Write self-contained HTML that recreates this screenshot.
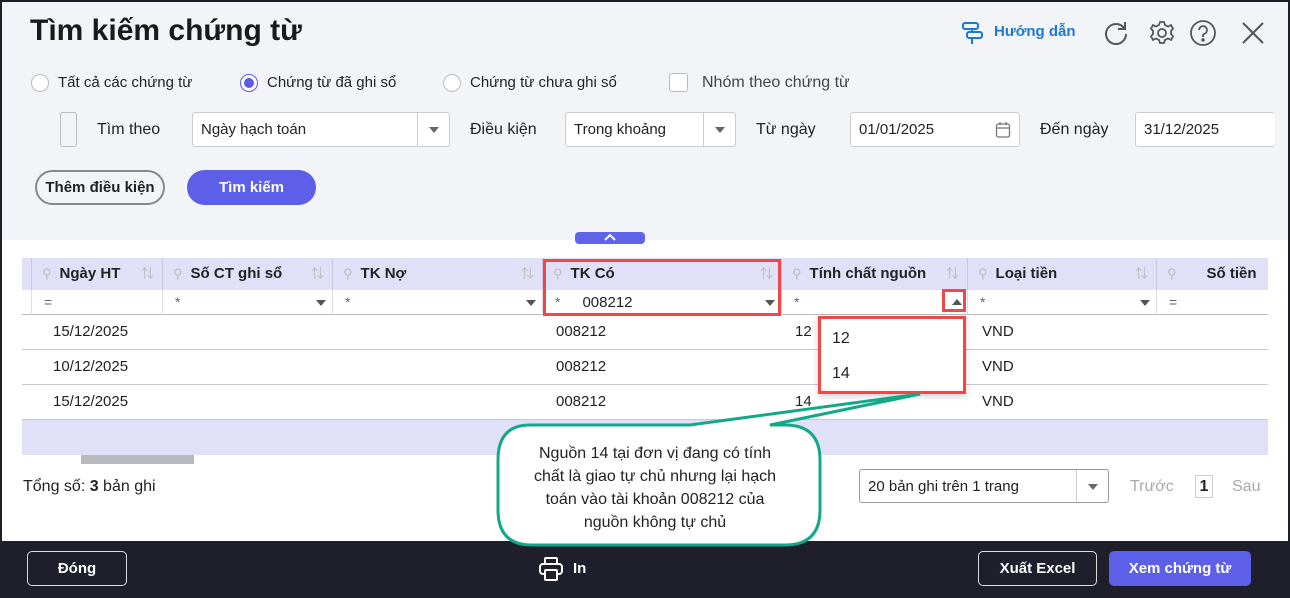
<!DOCTYPE html>
<html><head><meta charset="utf-8"><style>
*{margin:0;padding:0;box-sizing:border-box}
body{width:1290px;height:598px;overflow:hidden;font-family:"Liberation Sans","Noto Sans CJK SC",sans-serif;font-size:15px;color:#222;background:#1e1f2b;position:relative}
.a{position:absolute}
.top{left:2px;top:2px;width:1286px;height:238px;background:#f3f4f8}
.mid{left:2px;top:240px;width:1286px;height:301px;background:#fff}
.rad{width:18px;height:18px;border:1px solid #bbb;border-radius:50%;background:#fff}
.inp{background:#fff;border:1px solid #ccc;border-radius:3px;height:35px;padding:0 8px;line-height:33px;font-size:15px}
.dd{position:absolute;right:0;top:0;width:32px;height:33px;border-left:1px solid #ccc}
.dd:after{content:"";position:absolute;left:11px;top:14px;border:5px solid transparent;border-top:6px solid #666}
.th{top:258px;height:32px;background:#e0e0f8;font-weight:bold;font-size:15px;line-height:32px;border-right:1px solid #c8c8e0}
.fr{top:290px;height:25px;background:#fff;border-right:1px solid #ddd;border-bottom:1px solid #bbb;font-size:14px;color:#666;line-height:25px}
.row{left:22px;width:1246px;height:1px;background:#c8c8d4}
.c{font-size:15px;line-height:34px}
.pin{color:#bbb;font-weight:normal;margin:0 8px 0 10px;font-size:13px}
.srt{position:absolute;right:8px;top:0;color:#bbb;font-weight:normal;font-size:13px}
.btn{border-radius:5px;font-weight:bold;color:#fff;text-align:center;font-size:15px}
</style></head><body>
<div class="a top"></div><div class="a mid"></div>
<div class="a" style="left:30px;top:14px;font-size:30px;font-weight:bold;color:#1a1a1a">Tìm kiếm chứng từ</div>
<svg class="a" style="left:960px;top:20px" width="26" height="26" viewBox="0 0 26 26" fill="none" stroke="#1a78d6" stroke-width="2"><rect x="3" y="3" width="15" height="6" rx="2"/><rect x="7" y="12" width="15" height="6" rx="2"/><path d="M12 9v3M12 18v6"/></svg>
<div class="a" style="left:994px;top:23px;color:#1a78d6;font-weight:bold;font-size:15px">Hướng dẫn</div>
<svg class="a" style="left:1102px;top:19px" width="28" height="28" viewBox="0 0 28 28" fill="none" stroke="#555" stroke-width="2"><path d="M22 9A10 10 0 1 0 24 15"/><path d="M23 3v7h-7"/></svg>
<svg class="a" style="left:1148px;top:19px" width="28" height="28" viewBox="0 0 28 28" fill="none" stroke="#555" stroke-width="1.8"><circle cx="14" cy="14" r="4"/><path d="M12 3h4l1 3 3 1.5 3-1.5 2 3.5-2 2.5v3l2 2.5-2 3.5-3-1.5-3 1.5-1 3h-4l-1-3-3-1.5-3 1.5-2-3.5 2-2.5v-3l-2-2.5 2-3.5 3 1.5 3-1.5z"/></svg>
<svg class="a" style="left:1189px;top:19px" width="28" height="28" viewBox="0 0 28 28" fill="none" stroke="#555" stroke-width="1.8"><circle cx="14" cy="14" r="12"/><path d="M10 11a4 4 0 1 1 5 4c-1 .5-1 1-1 3"/><circle cx="14" cy="21" r=".8" fill="#555"/></svg>
<svg class="a" style="left:1240px;top:20px" width="26" height="26" viewBox="0 0 26 26" stroke="#555" stroke-width="2"><path d="M3 3l20 20M23 3L3 23"/></svg>

<div class="a rad" style="left:31px;top:74px"></div><div class="a" style="left:58px;top:74px">Tất cả các chứng từ</div>
<div class="a rad" style="left:240px;top:74px;border-color:#5b5be8"><div style="margin:3px;width:10px;height:10px;border-radius:50%;background:#5b5be8"></div></div><div class="a" style="left:267px;top:74px">Chứng từ đã ghi sổ</div>
<div class="a rad" style="left:443px;top:74px"></div><div class="a" style="left:470px;top:74px">Chứng từ chưa ghi sổ</div>
<div class="a" style="left:669px;top:73px;width:19px;height:19px;border:1px solid #bbb;border-radius:3px;background:#fff"></div><div class="a" style="left:702px;top:74px;color:#444;font-size:16px">Nhóm theo chứng từ</div>

<div class="a" style="left:60px;top:112px;width:17px;height:35px;border:1px solid #bbb;border-radius:3px;background:#f3f4f8"></div>
<div class="a" style="left:97px;top:121px;font-size:16px">Tìm theo</div>
<div class="a inp" style="left:192px;top:112px;width:258px">Ngày hạch toán<div class="dd"></div></div>
<div class="a" style="left:470px;top:121px;font-size:16px">Điều kiện</div>
<div class="a inp" style="left:565px;top:112px;width:171px">Trong khoảng<div class="dd"></div></div>
<div class="a" style="left:756px;top:121px;font-size:16px">Từ ngày</div>
<div class="a inp" style="left:850px;top:112px;width:170px">01/01/2025
<svg class="a" style="right:8px;top:8px" width="16" height="18" viewBox="0 0 16 18" fill="none" stroke="#777" stroke-width="1.3"><rect x="1.5" y="3" width="13" height="13" rx="2"/><path d="M1.5 7h13M5 1v3M11 1v3"/></svg></div>
<div class="a" style="left:1040px;top:121px;font-size:16px">Đến ngày</div>
<div class="a inp" style="left:1135px;top:112px;width:140px;border-right:none">31/12/2025</div>

<div class="a" style="left:35px;top:170px;width:130px;height:35px;border:2px solid #888;border-radius:18px;font-weight:bold;text-align:center;line-height:31px;font-size:15px">Thêm điều kiện</div>
<div class="a btn" style="left:187px;top:170px;width:129px;height:35px;border-radius:18px;background:#5d5fe8;line-height:35px">Tìm kiếm</div>
<div class="a" style="left:575px;top:232px;width:70px;height:12px;border-radius:4px;background:#6163e8"><svg style="display:block;margin:1px auto" width="14" height="9" viewBox="0 0 14 9" fill="none" stroke="#fff" stroke-width="2"><path d="M2 7l5-5 5 5"/></svg></div>

<div class="a th" style="left:22px;width:10px"></div>
<div class="a th" style="left:32px;width:131px"><span class="pin">⚲</span>Ngày HT<span class="srt">⇅</span></div>
<div class="a th" style="left:163px;width:170px"><span class="pin">⚲</span>Số CT ghi sổ<span class="srt">⇅</span></div>
<div class="a th" style="left:333px;width:210px"><span class="pin">⚲</span>TK Nợ<span class="srt">⇅</span></div>
<div class="a th" style="left:543px;width:239px"><span class="pin">⚲</span>TK Có<span class="srt">⇅</span></div>
<div class="a th" style="left:782px;width:186px"><span class="pin">⚲</span>Tính chất nguồn<span class="srt">⇅</span></div>
<div class="a th" style="left:968px;width:189px"><span class="pin">⚲</span>Loại tiền<span class="srt">⇅</span></div>
<div class="a th" style="left:1157px;width:111px;border-right:none"><span class="pin" style="margin-right:30px">⚲</span>Số tiền</div>
<div class="a fr" style="left:22px;width:10px"></div>
<div class="a fr" style="left:32px;width:131px;padding-left:12px">=</div>
<div class="a fr" style="left:163px;width:170px;padding-left:12px">*</div>
<div class="a fr" style="left:333px;width:210px;padding-left:12px">*</div>
<div class="a fr" style="left:543px;width:239px;padding-left:12px">*<span style="color:#222;margin-left:22px;font-size:15px">008212</span></div>
<div class="a fr" style="left:782px;width:186px;padding-left:12px">*</div>
<div class="a fr" style="left:968px;width:189px;padding-left:12px">*</div>
<div class="a fr" style="left:1157px;width:111px;padding-left:12px;border-right:none">=</div>
<div class="a" style="left:316px;top:300px;border:5px solid transparent;border-top:6px solid #555"></div>
<div class="a" style="left:526px;top:300px;border:5px solid transparent;border-top:6px solid #555"></div>
<div class="a" style="left:765px;top:300px;border:5px solid transparent;border-top:6px solid #555"></div>
<div class="a" style="left:1140px;top:300px;border:5px solid transparent;border-top:6px solid #555"></div>
<div class="a" style="left:952px;top:294px;border:5px solid transparent;border-bottom:6px solid #555"></div>
<div class="a row" style="top:349px"></div><div class="a row" style="top:384px"></div><div class="a row" style="top:419px"></div>
<div class="a" style="left:22px;top:420px;width:1246px;height:35px;background:#e0e0f8"></div>
<div class="a c" style="left:53px;top:315px">15/12/2025</div><div class="a c" style="left:53px;top:350px">10/12/2025</div><div class="a c" style="left:53px;top:385px">15/12/2025</div>
<div class="a c" style="left:556px;top:315px">008212</div><div class="a c" style="left:556px;top:350px">008212</div><div class="a c" style="left:556px;top:385px">008212</div>
<div class="a c" style="left:795px;top:315px">12</div><div class="a c" style="left:795px;top:385px">14</div>
<div class="a c" style="left:982px;top:315px">VND</div><div class="a c" style="left:982px;top:350px">VND</div><div class="a c" style="left:982px;top:385px">VND</div>
<div class="a" style="left:543px;top:259px;width:238px;height:57px;border:3px solid #f04848"></div>
<div class="a" style="left:942px;top:289px;width:24px;height:23px;border:3px solid #f04848"></div>
<div class="a" style="left:818px;top:316px;width:148px;height:78px;background:#fff;border:3px solid #f04848;box-shadow:0 2px 6px rgba(0,0,0,.2)"></div>
<div class="a" style="left:832px;top:330px;font-size:16px">12</div><div class="a" style="left:832px;top:365px;font-size:16px">14</div>
<div class="a" style="left:81px;top:455px;width:113px;height:9px;background:#b8b9be"></div>
<div class="a" style="left:23px;top:478px;font-size:16px">Tổng số: <b>3</b> bản ghi</div>
<div class="a inp" style="left:859px;top:469px;width:250px;height:34px;border-color:#999">20 bản ghi trên 1 trang<div class="dd"></div></div>
<div class="a" style="left:1130px;top:478px;color:#aaa;font-size:16px">Trước</div>
<div class="a" style="left:1195px;top:475px;width:18px;height:23px;border:1px solid #ccc;font-weight:bold;text-align:center;line-height:22px;font-size:16px">1</div>
<div class="a" style="left:1232px;top:478px;color:#aaa;font-size:16px">Sau</div>
<svg class="a" style="left:0;top:0" width="1290" height="598"><path d="M530 425 L690 425 L920 394 L770 425 L785 425 Q820 425 820 460 L820 510 Q820 545 785 545 L532 545 Q498 545 498 510 L498 460 Q498 425 530 425 Z" fill="#fff" stroke="#14a88a" stroke-width="3"/></svg>
<div class="a" style="left:496px;top:442px;width:318px;text-align:center;font-size:16px;line-height:23px;color:#222">Nguồn 14 tại đơn vị đang có tính<br>chất là giao tự chủ nhưng lại hạch<br>toán vào tài khoản 008212 của<br>nguồn không tự chủ</div>
<div class="a btn" style="left:27px;top:551px;width:100px;height:35px;border:1px solid #ddd;line-height:33px;background:#1e1f2b">Đóng</div>
<svg class="a" style="left:537px;top:555px" width="28" height="28" viewBox="0 0 28 28" fill="none" stroke="#fff" stroke-width="2"><rect x="8" y="3" width="12" height="6" rx="1"/><rect x="3" y="9" width="22" height="10" rx="3"/><rect x="8" y="15" width="12" height="10" rx="1" fill="#1e1f2b"/></svg>
<div class="a btn" style="left:573px;top:560px">In</div>
<div class="a btn" style="left:978px;top:551px;width:119px;height:35px;border:1px solid #ddd;line-height:33px">Xuất Excel</div>
<div class="a btn" style="left:1109px;top:551px;width:142px;height:35px;background:#5d5fe8;line-height:35px">Xem chứng từ</div>
</body></html>
